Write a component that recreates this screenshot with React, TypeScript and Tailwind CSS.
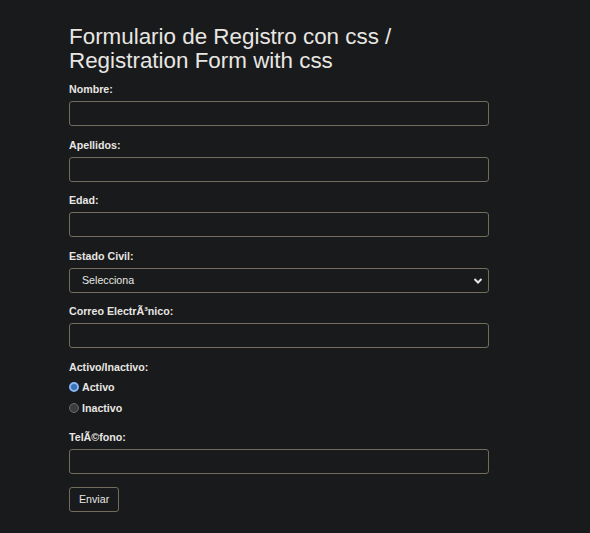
import React from 'react';

const Field: React.FC<{ label: string }> = ({ label }) => (
  <div className="mb-[12.5px]">
    <label className="block text-[10.67px] font-bold leading-[13px] mb-[5px]">{label}</label>
    <input type="text" className="block w-[420px] h-[25px] rounded-[3px] border border-[#736b5e] bg-[#181a1b] outline-none" />
  </div>
);

const Radio: React.FC<{ label: string; checked?: boolean }> = ({ label, checked }) => (
  <div className="flex items-center h-[21px] gap-[3px]">
    {checked ? (
      <span className="w-[10px] h-[10px] rounded-full border-[2px] border-[#8ab4f8] bg-[#3b6fb6] box-border" />
    ) : (
      <span className="w-[10px] h-[10px] rounded-full border border-[#6b6b6b] bg-[#3a3d40] box-border" />
    )}
    <span className="text-[10.67px] font-bold">{label}</span>
  </div>
);

export default function App() {
  return (
    <div className="min-h-[533px] bg-[#181a1b] text-[#e8e6e3] font-['Liberation_Sans',Arial,sans-serif] pl-[69px] pt-[25px]">
      <h1 className="text-[22.4px] leading-[24px] font-normal mb-[10px]">
        Formulario de Registro con css /<br />Registration Form with css
      </h1>
      <form onSubmit={(e) => e.preventDefault()}>
        <Field label="Nombre:" />
        <Field label="Apellidos:" />
        <Field label="Edad:" />
        <div className="mb-[12.5px]">
          <label className="block text-[10.67px] font-bold leading-[13px] mb-[5px]">Estado Civil:</label>
          <div className="relative w-[420px] h-[25px] rounded-[3px] border border-[#736b5e] bg-[#181a1b] flex items-center pl-[12px] text-[10.67px]">
            Selecciona
            <svg className="absolute right-[5px] top-[7px]" width="10" height="10" viewBox="0 0 10 10">
              <path d="M1.5 3 L5 6.5 L8.5 3" fill="none" stroke="#e8e6e3" strokeWidth="2" />
            </svg>
          </div>
        </div>
        <Field label="Correo ElectrÃ³nico:" />
        <div className="mb-[12.5px]">
          <label className="block text-[10.67px] font-bold leading-[13px] mb-[3px]">Activo/Inactivo:</label>
          <Radio label="Activo" checked />
          <Radio label="Inactivo" />
        </div>
        <Field label="TelÃ©fono:" />
        <button type="submit" className="block h-[25px] px-[9px] rounded-[3px] border border-[#736b5e] bg-[#181a1b] text-[10.67px]">
          Enviar
        </button>
      </form>
    </div>
  );
}
